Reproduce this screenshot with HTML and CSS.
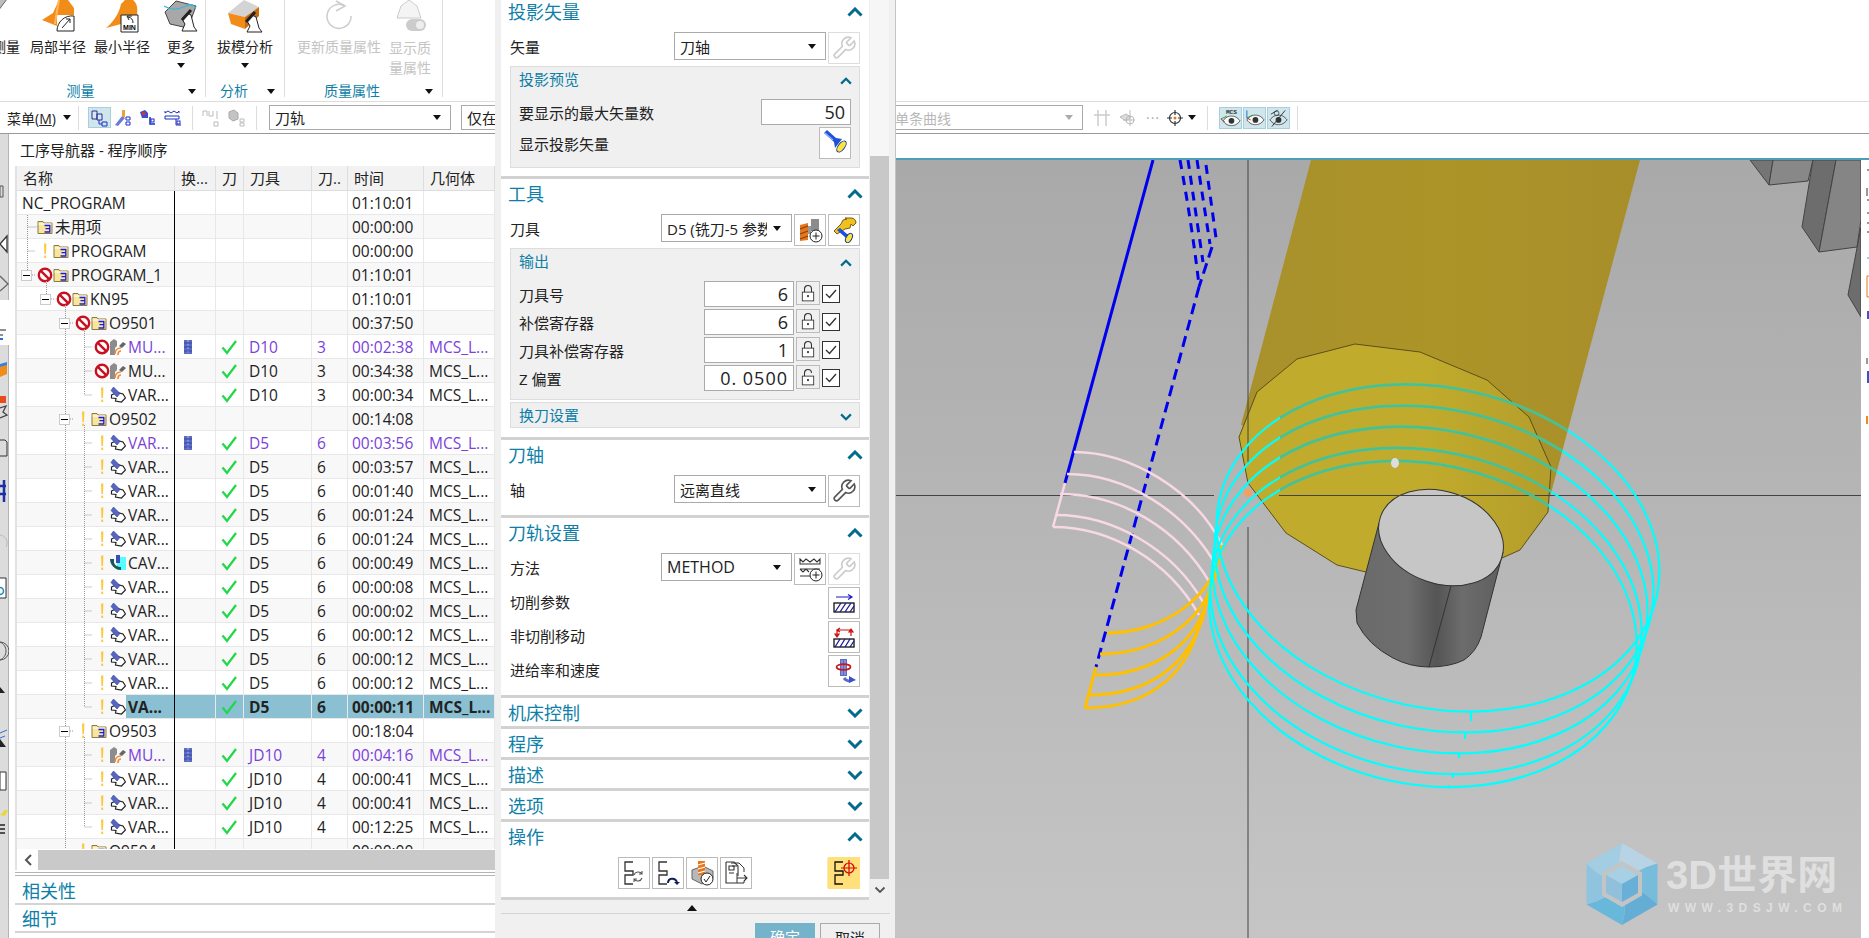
FILE: index.html
```html
<!DOCTYPE html>
<html lang="zh">
<head>
<meta charset="utf-8">
<title>工序导航器</title>
<link rel="stylesheet" href="styles.css">
</head>
<body>
<svg class="defs" width="0" height="0">
  <symbol id="stop" viewBox="0 0 16 16"><circle cx="8" cy="8" r="6.2" fill="#fff" stroke="#c9101f" stroke-width="2.4"/><path d="M3.600 3.600l8.800 8.800" stroke="#c9101f" stroke-width="2.400"/></symbol>
  <symbol id="bang" viewBox="0 0 16 16"><path d="M7 .5h2.400L9 11H7.400z" fill="#ffc83d"/><rect x="7.200" y="12.600" width="2" height="2.400" fill="#ffc83d"/></symbol>
  <symbol id="folder" viewBox="0 0 16 16"><path d="M1 14.500V2.500h5l1 1.500h8v10.500z" fill="#f7e69c" stroke="#8a7a3c"/><path d="M1.500 5h13" stroke="#fff"/><path d="M7.500 6.500h5.300v3.200H8.500m4.300 0v3.300H7.500" fill="none" stroke="#1b1be0" stroke-width="1.300"/></symbol>
  <symbol id="var" viewBox="0 0 16 16"><path d="M1.500 8L7 5.500l6 1.500 2.500 4-4 4-6-1 .5-2.500L1.500 11z" fill="#fff" stroke="#222" stroke-width="1.200"/><path d="M3.500 0L10 6.500 7 10 1 3.500z" fill="#5566c4" stroke="#34408c" stroke-width=".6"/></symbol>
  <symbol id="mu" viewBox="0 0 16 16"><path d="M0 16V3l4-3 3 2v5L5 9v7z" fill="#8c8c8c"/><path d="M5 15c0-3 2-6 6-6M8 16c0-2 1-4 3-4" fill="none" stroke="#ef8a3c" stroke-width="1.700"/><path d="M9 7l4-4 3 2-4 4z" fill="#666"/></symbol>
  <symbol id="cav" viewBox="0 0 16 16"><rect x="7" y="2" width="9" height="13" fill="#5ff"/><path d="M0 4h4v3c0 3 4 5 7 5v3C5 15 0 10 0 4z" fill="#15595a"/><path d="M6 0h4v8H6z" fill="#3a50b8"/></symbol>
  <symbol id="chk" viewBox="0 0 16 16"><path d="M1.500 8.500l4.500 5.500L15 2" fill="none" stroke="#22d84a" stroke-width="2.300"/></symbol>
  <symbol id="bar" viewBox="0 0 8 14"><rect width="8" height="14" fill="#5a6cc4"/><path d="M4 0v14" stroke="#b8c2ec" stroke-dasharray="2 1.500"/><path d="M0 3h8M0 7h8M0 11h8" stroke="#2b3a94" stroke-width=".7"/></symbol>
  <symbol id="wrench" viewBox="0 0 24 24"><path d="M14.700 6.300a1 1 0 0 0 0 1.400l1.600 1.600a1 1 0 0 0 1.400 0l3.770-3.770a6 6 0 0 1-7.940 7.940l-6.910 6.910a2.120 2.120 0 0 1-3-3l6.910-6.910a6 6 0 0 1 7.940-7.940l-3.760 3.760z" fill="#fff" stroke="currentColor" stroke-width="1.500"/></symbol>
  <symbol id="lock" viewBox="0 0 16 20"><path d="M4 9V5.500a4 4 0 0 1 8 0V9" fill="none" stroke="#333" stroke-width="1.200"/><rect x="1.500" y="9" width="13" height="10" fill="#fff" stroke="#333"/><circle cx="8" cy="13.500" r="1.300" fill="#333"/></symbol>
  <symbol id="unlock" viewBox="0 0 16 20"><path d="M4 9V5.500a4 4 0 0 1 8 0" fill="none" stroke="#333" stroke-width="1.200"/><rect x="1.500" y="9" width="13" height="10" fill="#fff" stroke="#333"/><circle cx="8" cy="13.500" r="1.300" fill="#333"/></symbol>
  <symbol id="torch" viewBox="0 0 26 26"><path d="M2 3l3-3 9 8 6 1-7 9-1-6z" fill="#1e50d8"/><path d="M3 3l8 7" stroke="#8fb0ff" stroke-width="1.200"/><ellipse cx="19.500" cy="16.500" rx="6.500" ry="3.200" transform="rotate(128 19.500 16.500)" fill="#ffe23c" stroke="#123a9c"/></symbol>
  <symbol id="meander" viewBox="0 0 16 26"><path d="M12 2H4v9h8v4H4v9h8" fill="none" stroke="currentColor" stroke-width="1.300"/></symbol>
  <symbol id="up" viewBox="0 0 16 10"><path d="M1.500 8.500L8 2l6.500 6.500" fill="none" stroke="#036b8c" stroke-width="3"/></symbol>
  <symbol id="down" viewBox="0 0 16 10"><path d="M1.500 1.500L8 8l6.500-6.500" fill="none" stroke="#036b8c" stroke-width="3"/></symbol>
</svg>

<div class="app">
  <header class="ribbon">
    <section class="group g1">
      <div class="tools">
        <div class="tool t-measure"><svg class="ricon" width="32" height="33" viewBox="0 0 32 33"><path d="M20 -6l5 5L4 27l-6-5z" fill="#bdbdbd" stroke="#666"/><path d="M4 22l2 2M8 17l2 2M12 12l2 2M16 7l2 2" stroke="#333"/></svg><span class="tlabel">测量</span></div>
        <div class="tool t-wide"><svg class="ricon" width="34" height="33" viewBox="0 0 34 33"><path d="M1 20L12 13 18 0H27L33 8V15H16V26z" fill="#f28c18"/><path d="M18 0c-2 10-3 16-4 24" fill="none" stroke="#ffb55a" stroke-width="2"/><path d="M16 31a15 15 0 0 1 17-15v15z" fill="#fff" stroke="#222"/><path d="M21 28l8-9m-4 0h4v4" fill="none" stroke="#222"/></svg><span class="tlabel">局部半径</span></div>
        <div class="tool t-wide"><svg class="ricon" width="34" height="33" viewBox="0 0 34 33"><path d="M1 28C8 22 14 14 16 4L20 0H28C32 3 33 8 32 15H16V24z" fill="#f28c18"/><path d="M16 15h17v17H16z" fill="#fff" stroke="#222"/><path d="M28 23a6 6 0 0 0-5-6m4-1h-5l2 4" fill="none" stroke="#222"/><text class="mintext" x="24.500" y="30">MIN</text></svg><span class="tlabel">最小半径</span></div>
        <div class="tool t-more"><svg class="ricon" width="34" height="33" viewBox="0 0 34 33"><path d="M1 12L12 1l20 5-8 22-18-4z" fill="#a8a8a8" stroke="#444"/><path d="M0 6c8 5 16 3 22 0s8 0 10 2" fill="none" stroke="#3cb6d8" stroke-width="1.300"/><path d="M18 31h15l-3-4-3-12-4-2-5 6 3 5z" fill="#fff" stroke="#222"/><path d="M18 20l9-10" stroke="#222" stroke-width="3"/></svg><span class="tlabel">更多</span><i class="caret"></i></div>
      </div>
      <div class="gfoot"><span class="gname">测量</span><i class="caret"></i></div>
    </section>
    <section class="group g2">
      <div class="tools">
        <div class="tool t-draft"><svg class="ricon" width="36" height="33" viewBox="0 0 36 33"><path d="M1 13L17 0l15 7-14 10z" fill="#d4d4d4"/><path d="M1 13l17 4v12L4 24z" fill="#f28c18"/><path d="M18 17l14-10v9l-14 13z" fill="#c66c10"/><path d="M20 32h15l-3-4-3-11-4-2-5 6 3 5z" fill="#fff" stroke="#222"/><path d="M19 22l9-10" stroke="#222" stroke-width="3"/></svg><span class="tlabel">拔模分析</span><i class="caret"></i></div>
      </div>
      <div class="gfoot"><span class="gname">分析</span><i class="caret"></i></div>
    </section>
    <section class="group g3">
      <div class="tools">
        <div class="tool t-update dis"><svg class="ricon" width="34" height="33" viewBox="0 0 34 33"><path d="M23 6a12 12 0 1 0 6 10" fill="none" stroke="#ccc" stroke-width="1.500"/><path d="M14 1l9 5-9 5" fill="none" stroke="#ccc" stroke-width="1.500"/></svg><span class="tlabel">更新质量属性</span></div>
        <div class="tool t-show dis"><svg class="ricon" width="34" height="33" viewBox="0 0 34 33"><path d="M8 6l8-6 8 6 4 12H4z" fill="#f4f4f4" stroke="#ccc"/><rect x="13" y="19" width="20" height="12" rx="6" fill="#ccc"/><circle cx="27" cy="25" r="4" fill="#eee"/></svg><span class="tlabel">显示质量属性</span></div>
      </div>
      <div class="gfoot"><span class="gname">质量属性</span><i class="caret"></i></div>
    </section>
  </header>

  <nav class="toolbar">
    <span class="menu">菜单(<u>M</u>)</span><i class="caret"></i>
    <i class="tsep s1"></i>
    <span class="tbtn on"><svg width="18" height="18" viewBox="0 0 18 18"><path d="M1 2h5v8H1zM6 5h5v6H6z" fill="#dce4f8" stroke="#23318c"/><path d="M11 13h5v4h-5zM8 11v4h3" fill="none" stroke="#1a2fc4"/></svg></span>
    <span class="tbtn"><svg width="18" height="18" viewBox="0 0 18 18"><path d="M1 16l7-9 3 2-7 8z" fill="#6a7ad8"/><path d="M8 1h3v7H8z" fill="#e8a23c"/><path d="M12 8h4v3h-4zM12 13h4v3h-4z" fill="none" stroke="#1a2fc4"/></svg></span>
    <span class="tbtn"><svg width="18" height="18" viewBox="0 0 18 18"><path d="M1 3l5-2 3 3v5H3z" fill="#3a4fc8"/><rect x="3" y="3" width="3" height="3" fill="#d8303c"/><path d="M11 8v7h5" fill="none" stroke="#1a2fc4" stroke-width="1.500"/><rect x="12" y="10" width="3" height="3" fill="none" stroke="#1a2fc4"/></svg></span>
    <span class="tbtn"><svg width="18" height="18" viewBox="0 0 18 18"><path d="M1 2v2l3-2 3 2 3-2 3 2 2-2v2M1 7h14v3H1z" fill="none" stroke="#1a2fc4"/><path d="M12 10v6h5" fill="none" stroke="#1a2fc4"/><rect x="13" y="12" width="3" height="3" fill="none" stroke="#1a2fc4"/></svg></span>
    <i class="tsep s2"></i>
    <span class="tbtn"><svg width="18" height="18" viewBox="0 0 18 18"><path d="M1 2v5M1 2h4v5M7 2v5h4V2m4 0v8m-3 3h4v4h-4z" fill="none" stroke="#bbb"/></svg></span>
    <span class="tbtn"><svg width="18" height="18" viewBox="0 0 18 18"><path d="M2 3l5-2 4 3v6l-5 2-4-3z" fill="#c4c4c4" stroke="#aaa"/><path d="M13 10h4v3h-4zM13 14h4v3h-4z" fill="none" stroke="#bbb"/></svg></span>
    <i class="tsep s3"></i>
    <div class="sel-box f1"><span>刀轨</span><i class="caret"></i></div>
    <div class="sel-box f2"><span>仅在工作部件内部</span><i class="caret"></i></div>
    <div class="sel-box f3"><span class="grey">单条曲线</span><i class="caret gc"></i></div>
    <span class="sicon i1"><svg width="17" height="18" viewBox="0 0 17 18"><path d="M4 1v16M12 1v16M0 6h16" stroke="#ccc" stroke-width="1.500"/></svg></span>
    <span class="sicon i2"><svg width="17" height="18" viewBox="0 0 17 18"><path d="M1 8l6-3 5 3-5 4z" fill="#ddd" stroke="#bbb"/><circle cx="11" cy="11" r="4" fill="none" stroke="#bbb"/><path d="M11 1v16M4 11h12" stroke="#bbb"/></svg></span>
    <span class="dots">···</span>
    <span class="sicon i3"><svg width="16" height="16" viewBox="0 0 16 16"><circle cx="8" cy="8" r="5.500" fill="#fff" stroke="#333" stroke-width="1.200"/><path d="M8 0v5M8 11v5M0 8h5M11 8h5" stroke="#333" stroke-width="1.200"/><circle cx="8" cy="8" r="1.500" fill="#e8761c"/></svg></span>
    <i class="caret cs"></i>
    <i class="tsep s4"></i>
    <span class="vbtn"><svg width="21" height="20" viewBox="0 0 22 20"><text class="mcs" x="12" y="6">MCS</text><path d="M3 13c3-4 6-5 9-5s6 1 9 5c-3 4-6 5-9 5s-6-1-9-5z" fill="#f4fafb" stroke="#333" stroke-width=".8"/><circle cx="12" cy="13" r="3" fill="#333"/><path d="M1 11l6-3" stroke="#21a83c"/><path d="M1 11l4 3" stroke="#d8202c"/></svg></span>
    <span class="vbtn"><svg width="21" height="20" viewBox="0 0 22 20"><path d="M3 12c3-4 6-5 9-5s6 1 9 5c-3 4-6 5-9 5s-6-1-9-5z" fill="#f4fafb" stroke="#333" stroke-width=".8"/><circle cx="12" cy="12" r="3" fill="#333"/><path d="M3 2v8" stroke="#1c6fd8"/><path d="M3 10l6-3" stroke="#21a83c"/><path d="M3 10l4 2" stroke="#d8202c"/></svg></span>
    <span class="vbtn"><svg width="21" height="20" viewBox="0 0 22 20"><path d="M2 12c3-4 6-5 9-5s6 1 9 5c-3 4-6 5-9 5s-6-1-9-5z" fill="none" stroke="#333" stroke-width=".8"/><circle cx="11" cy="12" r="3" fill="#333"/><path d="M4 19L18 2M3 6l7-4" stroke="#333"/><circle cx="9" cy="5" r="2.500" fill="none" stroke="#333" stroke-width=".8"/></svg></span>
    <i class="tsep s5"></i>
  </nav>

  <main class="main">
    <aside class="strip">
      <svg width="9" height="804" viewBox="0 134 9 804">
        <rect y="134" width="8" height="166" fill="#dcdcdc"/>
        <rect x="8" y="134" width="1" height="166" fill="#b4b4b4"/>
        <rect y="345" width="8" height="593" fill="#dcdcdc"/>
        <rect x="8" y="345" width="1" height="593" fill="#b4b4b4"/>
        <path d="M3 186h-3v11h3z" fill="none" stroke="#555"/>
        <path d="M7 236L0 244l7 8z" fill="#fff" stroke="#333" stroke-width="1.300"/>
        <path d="M0 276l8 8-8 7" fill="none" stroke="#666" stroke-width="1.300"/>
        <path d="M0 330h6M0 335h3" stroke="#222"/><path d="M0 339h3" stroke="#2a6fd8" stroke-width="2"/>
        <path d="M0 367l7-3v10l-7 3z" fill="#f28c18"/><path d="M0 364l7-2v3l-7 2z" fill="#3a7fd8"/>
        <rect x="0" y="396" width="6" height="7" fill="#e84c1c"/><path d="M0 408l6-2-3 6 4 3-7 3" fill="none" stroke="#444" stroke-width="1.300"/>
        <path d="M0 440h5l2 2v14H0" fill="none" stroke="#333"/>
        <path d="M4 480v22M0 486h6M0 494h6" stroke="#1e2ea8" stroke-width="2.500"/>
        <path d="M0 535a8 8 0 0 1 6 12" fill="none" stroke="#bbb"/>
        <path d="M0 578h6v20H0" fill="#fff" stroke="#333"/><circle cx="0" cy="591" r="3.500" fill="none" stroke="#1e8ab8" stroke-width="1.500"/>
        <path d="M0 642a9 9 0 0 1 0 18c4-2 6-5 6-9s-2-7-6-9z" fill="none" stroke="#555"/>
        <path d="M0 687l5 6H0z" fill="#222"/>
        <path d="M0 733l7-3M0 738l5-2" stroke="#2a6fd8"/><path d="M0 739l6 8H0z" fill="#222"/>
        <path d="M0 772h6v18H0z" fill="#fff" stroke="#333"/>
        <path d="M0 815l5-5h3l-3 6z" fill="#e8d83c"/><path d="M0 825h5M0 829h5M0 833h5" stroke="#222" stroke-width="1.500"/>
      </svg>
    </aside>

    <section class="nav">
      <h2 class="nav-title">工序导航器 - 程序顺序</h2>
      <div class="table">
        <div class="thead">
          <div class="h hname">名称</div><div class="h">换...</div><div class="h">刀</div><div class="h">刀具</div><div class="h">刀..</div><div class="h">时间</div><div class="h">几何体</div>
        </div>
        <div class="rows">
          <div class="row"><div class="name lv0"><span class="lbl">NC_PROGRAM</span></div><div class="c"></div><div class="c"></div><div class="c"></div><div class="c"></div><div class="c t">01:10:01</div><div class="c g"></div></div>
          <div class="row"><div class="name lv1"><i class="gap"></i><svg class="si"><use href="#folder"/></svg><span class="lbl">未用项</span></div><div class="c"></div><div class="c"></div><div class="c"></div><div class="c"></div><div class="c t">00:00:00</div><div class="c g"></div></div>
          <div class="row"><div class="name lv1"><i class="gap"></i><svg class="si"><use href="#bang"/></svg><svg class="si"><use href="#folder"/></svg><span class="lbl">PROGRAM</span></div><div class="c"></div><div class="c"></div><div class="c"></div><div class="c"></div><div class="c t">00:00:00</div><div class="c g"></div></div>
          <div class="row"><div class="name lv1"><i class="box"></i><svg class="si"><use href="#stop"/></svg><svg class="si"><use href="#folder"/></svg><span class="lbl">PROGRAM_1</span></div><div class="c"></div><div class="c"></div><div class="c"></div><div class="c"></div><div class="c t">01:10:01</div><div class="c g"></div></div>
          <div class="row"><div class="name lv2"><i class="box"></i><svg class="si"><use href="#stop"/></svg><svg class="si"><use href="#folder"/></svg><span class="lbl">KN95</span></div><div class="c"></div><div class="c"></div><div class="c"></div><div class="c"></div><div class="c t">01:10:01</div><div class="c g"></div></div>
          <div class="row"><div class="name lv3"><i class="box"></i><svg class="si"><use href="#stop"/></svg><svg class="si"><use href="#folder"/></svg><span class="lbl">O9501</span></div><div class="c"></div><div class="c"></div><div class="c"></div><div class="c"></div><div class="c t">00:37:50</div><div class="c g"></div></div>
          <div class="row pend"><div class="name lv4"><i class="gap"></i><svg class="si"><use href="#stop"/></svg><svg class="si"><use href="#mu"/></svg><span class="lbl">MU...</span></div><div class="c"><svg class="bar"><use href="#bar"/></svg></div><div class="c"><svg class="ck"><use href="#chk"/></svg></div><div class="c">D10</div><div class="c">3</div><div class="c t">00:02:38</div><div class="c g">MCS_L...</div></div>
          <div class="row"><div class="name lv4"><i class="gap"></i><svg class="si"><use href="#stop"/></svg><svg class="si"><use href="#mu"/></svg><span class="lbl">MU...</span></div><div class="c"></div><div class="c"><svg class="ck"><use href="#chk"/></svg></div><div class="c">D10</div><div class="c">3</div><div class="c t">00:34:38</div><div class="c g">MCS_L...</div></div>
          <div class="row"><div class="name lv4"><i class="gap"></i><svg class="si"><use href="#bang"/></svg><svg class="si"><use href="#var"/></svg><span class="lbl">VAR...</span></div><div class="c"></div><div class="c"><svg class="ck"><use href="#chk"/></svg></div><div class="c">D10</div><div class="c">3</div><div class="c t">00:00:34</div><div class="c g">MCS_L...</div></div>
          <div class="row"><div class="name lv3"><i class="box"></i><svg class="si"><use href="#bang"/></svg><svg class="si"><use href="#folder"/></svg><span class="lbl">O9502</span></div><div class="c"></div><div class="c"></div><div class="c"></div><div class="c"></div><div class="c t">00:14:08</div><div class="c g"></div></div>
          <div class="row pend"><div class="name lv4"><i class="gap"></i><svg class="si"><use href="#bang"/></svg><svg class="si"><use href="#var"/></svg><span class="lbl">VAR...</span></div><div class="c"><svg class="bar"><use href="#bar"/></svg></div><div class="c"><svg class="ck"><use href="#chk"/></svg></div><div class="c">D5</div><div class="c">6</div><div class="c t">00:03:56</div><div class="c g">MCS_L...</div></div>
          <div class="row"><div class="name lv4"><i class="gap"></i><svg class="si"><use href="#bang"/></svg><svg class="si"><use href="#var"/></svg><span class="lbl">VAR...</span></div><div class="c"></div><div class="c"><svg class="ck"><use href="#chk"/></svg></div><div class="c">D5</div><div class="c">6</div><div class="c t">00:03:57</div><div class="c g">MCS_L...</div></div>
          <div class="row"><div class="name lv4"><i class="gap"></i><svg class="si"><use href="#bang"/></svg><svg class="si"><use href="#var"/></svg><span class="lbl">VAR...</span></div><div class="c"></div><div class="c"><svg class="ck"><use href="#chk"/></svg></div><div class="c">D5</div><div class="c">6</div><div class="c t">00:01:40</div><div class="c g">MCS_L...</div></div>
          <div class="row"><div class="name lv4"><i class="gap"></i><svg class="si"><use href="#bang"/></svg><svg class="si"><use href="#var"/></svg><span class="lbl">VAR...</span></div><div class="c"></div><div class="c"><svg class="ck"><use href="#chk"/></svg></div><div class="c">D5</div><div class="c">6</div><div class="c t">00:01:24</div><div class="c g">MCS_L...</div></div>
          <div class="row"><div class="name lv4"><i class="gap"></i><svg class="si"><use href="#bang"/></svg><svg class="si"><use href="#var"/></svg><span class="lbl">VAR...</span></div><div class="c"></div><div class="c"><svg class="ck"><use href="#chk"/></svg></div><div class="c">D5</div><div class="c">6</div><div class="c t">00:01:24</div><div class="c g">MCS_L...</div></div>
          <div class="row"><div class="name lv4"><i class="gap"></i><svg class="si"><use href="#bang"/></svg><svg class="si"><use href="#cav"/></svg><span class="lbl">CAV...</span></div><div class="c"></div><div class="c"><svg class="ck"><use href="#chk"/></svg></div><div class="c">D5</div><div class="c">6</div><div class="c t">00:00:49</div><div class="c g">MCS_L...</div></div>
          <div class="row"><div class="name lv4"><i class="gap"></i><svg class="si"><use href="#bang"/></svg><svg class="si"><use href="#var"/></svg><span class="lbl">VAR...</span></div><div class="c"></div><div class="c"><svg class="ck"><use href="#chk"/></svg></div><div class="c">D5</div><div class="c">6</div><div class="c t">00:00:08</div><div class="c g">MCS_L...</div></div>
          <div class="row"><div class="name lv4"><i class="gap"></i><svg class="si"><use href="#bang"/></svg><svg class="si"><use href="#var"/></svg><span class="lbl">VAR...</span></div><div class="c"></div><div class="c"><svg class="ck"><use href="#chk"/></svg></div><div class="c">D5</div><div class="c">6</div><div class="c t">00:00:02</div><div class="c g">MCS_L...</div></div>
          <div class="row"><div class="name lv4"><i class="gap"></i><svg class="si"><use href="#bang"/></svg><svg class="si"><use href="#var"/></svg><span class="lbl">VAR...</span></div><div class="c"></div><div class="c"><svg class="ck"><use href="#chk"/></svg></div><div class="c">D5</div><div class="c">6</div><div class="c t">00:00:12</div><div class="c g">MCS_L...</div></div>
          <div class="row"><div class="name lv4"><i class="gap"></i><svg class="si"><use href="#bang"/></svg><svg class="si"><use href="#var"/></svg><span class="lbl">VAR...</span></div><div class="c"></div><div class="c"><svg class="ck"><use href="#chk"/></svg></div><div class="c">D5</div><div class="c">6</div><div class="c t">00:00:12</div><div class="c g">MCS_L...</div></div>
          <div class="row"><div class="name lv4"><i class="gap"></i><svg class="si"><use href="#bang"/></svg><svg class="si"><use href="#var"/></svg><span class="lbl">VAR...</span></div><div class="c"></div><div class="c"><svg class="ck"><use href="#chk"/></svg></div><div class="c">D5</div><div class="c">6</div><div class="c t">00:00:12</div><div class="c g">MCS_L...</div></div>
          <div class="row sel"><div class="name lv4"><i class="gap"></i><svg class="si"><use href="#bang"/></svg><svg class="si"><use href="#var"/></svg><span class="lbl">VA...</span></div><div class="c"></div><div class="c"><svg class="ck"><use href="#chk"/></svg></div><div class="c">D5</div><div class="c">6</div><div class="c t">00:00:11</div><div class="c g">MCS_L...</div></div>
          <div class="row"><div class="name lv3"><i class="box"></i><svg class="si"><use href="#bang"/></svg><svg class="si"><use href="#folder"/></svg><span class="lbl">O9503</span></div><div class="c"></div><div class="c"></div><div class="c"></div><div class="c"></div><div class="c t">00:18:04</div><div class="c g"></div></div>
          <div class="row pend"><div class="name lv4"><i class="gap"></i><svg class="si"><use href="#bang"/></svg><svg class="si"><use href="#mu"/></svg><span class="lbl">MU...</span></div><div class="c"><svg class="bar"><use href="#bar"/></svg></div><div class="c"><svg class="ck"><use href="#chk"/></svg></div><div class="c">JD10</div><div class="c">4</div><div class="c t">00:04:16</div><div class="c g">MCS_L...</div></div>
          <div class="row"><div class="name lv4"><i class="gap"></i><svg class="si"><use href="#bang"/></svg><svg class="si"><use href="#var"/></svg><span class="lbl">VAR...</span></div><div class="c"></div><div class="c"><svg class="ck"><use href="#chk"/></svg></div><div class="c">JD10</div><div class="c">4</div><div class="c t">00:00:41</div><div class="c g">MCS_L...</div></div>
          <div class="row"><div class="name lv4"><i class="gap"></i><svg class="si"><use href="#bang"/></svg><svg class="si"><use href="#var"/></svg><span class="lbl">VAR...</span></div><div class="c"></div><div class="c"><svg class="ck"><use href="#chk"/></svg></div><div class="c">JD10</div><div class="c">4</div><div class="c t">00:00:41</div><div class="c g">MCS_L...</div></div>
          <div class="row"><div class="name lv4"><i class="gap"></i><svg class="si"><use href="#bang"/></svg><svg class="si"><use href="#var"/></svg><span class="lbl">VAR...</span></div><div class="c"></div><div class="c"><svg class="ck"><use href="#chk"/></svg></div><div class="c">JD10</div><div class="c">4</div><div class="c t">00:12:25</div><div class="c g">MCS_L...</div></div>
          <div class="row"><div class="name lv3"><i class="gap"></i><svg class="si"><use href="#bang"/></svg><svg class="si"><use href="#folder"/></svg><span class="lbl">O9504</span></div><div class="c"></div><div class="c"></div><div class="c"></div><div class="c"></div><div class="c t">00:00:00</div><div class="c g"></div></div>
          <svg class="tree" width="157" height="658" viewBox="17 191 157 658">
            <path d="M27.500 215v55M27.500 227h9M27.500 251h8M32 275h4M46.500 281v13M51 299h4M65.500 305v13M70 323h4M65.500 329v85M70 419h4M65.500 425v301M70 731h4M65.500 737v112M84.500 329v66M84.500 347h8M84.500 371h8M84.500 395h8M84.500 425v282M84.500 443h8M84.500 467h8M84.500 491h8M84.500 515h8M84.500 539h8M84.500 563h8M84.500 587h8M84.500 611h8M84.500 635h8M84.500 659h8M84.500 683h8M84.500 707h8M84.500 737v90M84.500 755h8M84.500 779h8M84.500 803h8M84.500 827h8" fill="none" stroke="#999" stroke-dasharray="1 1"/>
          </svg>
        </div>
        <div class="hscroll"><span class="hleft"><svg width="8" height="12" viewBox="0 0 8 12"><path d="M7 1L2 6l5 5" fill="none" stroke="#555" stroke-width="2"/></svg></span><span class="hthumb"></span></div>
      </div>
      <div class="panes">
        <div class="pane">相关性</div>
        <div class="pane">细节</div>
      </div>
    </section>

    <div class="dialog-slot"></div>

    <section class="view">
      <div class="view-band"></div>
      <div class="view-row">
        <svg class="scene" width="965" height="778" viewBox="896 160 965 778">
          <defs>
            <linearGradient id="bg" x1="0" y1="0" x2="0" y2="1"><stop offset="0" stop-color="#a9a9a9"/><stop offset="1" stop-color="#c5c5c5"/></linearGradient>
            <linearGradient id="dark" x1="0" y1="0" x2="1" y2="0"><stop offset="0" stop-color="#a8902c"/><stop offset=".5" stop-color="#ad9428"/><stop offset="1" stop-color="#a88e2a"/></linearGradient>
            <linearGradient id="face" x1="0" y1="0" x2="1" y2="0"><stop offset="0" stop-color="#c0ab2c"/><stop offset=".6" stop-color="#c0ab2c"/><stop offset="1" stop-color="#b49e2c"/></linearGradient>
            <linearGradient id="steel" x1="0" y1="0" x2="1" y2="0"><stop offset="0" stop-color="#6a6a6a"/><stop offset=".35" stop-color="#6e6e6e"/><stop offset=".55" stop-color="#555"/><stop offset=".72" stop-color="#6c6c6c"/><stop offset="1" stop-color="#5e5e5e"/></linearGradient>
            <clipPath id="onYellow"><path d="M1311 160H1640L1550 497 1548 512 1520 550 1502 558 1366 572 1337 565 1286 533 1280 500V415Z"/></clipPath>
          </defs>
          <rect x="896" y="160" width="965" height="778" fill="url(#bg)"/>
          <path d="M1750 160l19 25 4-25z" fill="#757575" stroke="#444"/>
          <path d="M1773 160l-4 25 39-4 5-21z" fill="#888" stroke="#444"/>
          <path d="M1813 160l-11 67 17 25 17-92z" fill="#6d6d6d" stroke="#444"/>
          <path d="M1836 160l-17 92 38-5 4-27v-60z" fill="#858585" stroke="#444"/>
          <path d="M1861 227l-13 68 13 22z" fill="#6d6d6d" stroke="#444"/>

          <path d="M1311 160H1640L1550 497 1241 425Z" fill="url(#dark)"/>
          <path d="M1239 437L1257 392 1297 359 1355 344 1420 352 1487 380 1529 417 1551 467 1548 512 1520 550 1502 558 1366 572 1337 565 1286 533 1248 483Z" fill="url(#face)" stroke="#5c4f1a"/>
          <path d="M1379 523L1356 610 1357 623Q1368 645 1393 658 1410 667 1429 667 1450 667 1464 660 1476 652 1481 637L1503 552Z" fill="url(#steel)" stroke="#333"/>
          <path d="M1451 586L1429 667" stroke="#333"/>
          <ellipse cx="1441" cy="537.500" rx="64" ry="46" transform="rotate(19 1441 537.500)" fill="#c6c6c6" stroke="#333"/>

          <g class="axis">
            <path d="M1248 160V462M1248 527V938M896 495.500H1214M1279 495.500H1861"/>
          </g>

          <g class="toolpath blue">
            <path d="M1153 160L1065 483"/>
          </g>
          <g class="toolpath blue dash">
            <path d="M1199 287L1096 667"/>
            <path d="M1212 247L1199 287"/>
          </g>
          <g class="toolpath blue dash2">
            <path d="M1180 160Q1192 225 1199 285"/>
            <path d="M1188 160L1203 262"/>
            <path d="M1197 160L1210 244"/>
            <path d="M1206 165L1216 238"/>
          </g>

          <g class="toolpath pink">
            <path d="M1074 452C1130 452 1195 490 1222 545"/>
            <path d="M1067 474C1125 474 1185 510 1217 567"/>
            <path d="M1060 494C1120 494 1178 528 1210 583"/>
            <path d="M1056 515C1112 515 1172 548 1203 602"/>
            <path d="M1053 527C1110 527 1168 560 1199 615"/>
            <path d="M1065 483L1053 527"/>
          </g>
          <g class="toolpath amber">
            <path d="M1107 633C1160 633 1215 600 1222 545"/>
            <path d="M1100 654C1155 654 1208 622 1217 567"/>
            <path d="M1096 675C1150 675 1198 648 1210 590"/>
            <path d="M1089 695C1145 695 1190 668 1205 610"/>
            <path d="M1085 708C1140 708 1185 682 1199 625"/>
            <path d="M1096 667L1085 708"/>
          </g>

          <g class="rings cyan">
            <ellipse cx="1438" cy="548" rx="224" ry="160" transform="rotate(12.500 1438 548)"/>
            <ellipse cx="1434" cy="569" rx="222" ry="160" transform="rotate(12.500 1434 569)"/>
            <ellipse cx="1430" cy="590" rx="220" ry="160" transform="rotate(12.500 1430 590)"/>
            <ellipse cx="1426" cy="611" rx="218" ry="160" transform="rotate(12.500 1426 611)"/>
            <ellipse cx="1423" cy="624" rx="216" ry="160" transform="rotate(12.500 1423 624)"/>
            <path d="M1471 712v9M1465 732v7M1459 752v6M1453 773v5M1449 785v3"/>
          </g>
          <g class="rings teal" clip-path="url(#onYellow)">
            <ellipse cx="1438" cy="548" rx="224" ry="160" transform="rotate(12.500 1438 548)"/>
            <ellipse cx="1434" cy="569" rx="222" ry="160" transform="rotate(12.500 1434 569)"/>
            <ellipse cx="1430" cy="590" rx="220" ry="160" transform="rotate(12.500 1430 590)"/>
            <ellipse cx="1426" cy="611" rx="218" ry="160" transform="rotate(12.500 1426 611)"/>
            <ellipse cx="1423" cy="624" rx="216" ry="160" transform="rotate(12.500 1423 624)"/>
          </g>
          <circle cx="1248" cy="493" r="4" fill="#f0a060"/>
          <ellipse cx="1395" cy="463" rx="4" ry="5" fill="#ddd"/>

          <g transform="translate(1622 884)">
            <path class="b1" d="M0-41L35.500-20.500Q14.300-15.200 0 0Q-6-20 0-41Z"/>
            <path class="b2" d="M0-41L35.500-20.500Q14.300-15.200 0 0Q-6-20 0-41Z" transform="rotate(60)"/>
            <path class="b3" d="M0-41L35.500-20.500Q14.300-15.200 0 0Q-6-20 0-41Z" transform="rotate(120)"/>
            <path class="b4" d="M0-41L35.500-20.500Q14.300-15.200 0 0Q-6-20 0-41Z" transform="rotate(180)"/>
            <path class="b5" d="M0-41L35.500-20.500Q14.300-15.200 0 0Q-6-20 0-41Z" transform="rotate(240)"/>
            <path class="b6" d="M0-41L35.500-20.500Q14.300-15.200 0 0Q-6-20 0-41Z" transform="rotate(300)"/>
            <path d="M0-23L20-11.500V11.500L0 23-20 11.500V-11.500Z" fill="#c4c4c4"/>
            <path d="M0-18L16-9 0 0-16-9Z" fill="#a8d0e4"/>
            <path d="M-16-9L0 0V18L-16 9Z" fill="#90c0dc"/>
            <path d="M16-9L0 0V18L16 9Z" fill="#68b0d8"/>
          </g>
          <text class="wm" x="1666" y="889">3D世界网</text>
          <text class="wm2" x="1668" y="912" textLength="174" lengthAdjust="spacing">WWW.3DSJW.COM</text>
        </svg>
        <aside class="rstrip">
          <svg width="8" height="778" viewBox="1861 160 8 778">
            <path d="M1867 170h2M1867 188v8M1867 200h2M1867 213h2M1867 223h2M1867 232h2" stroke="#333"/>
            <path d="M1867 258h2" stroke="#3a9ad8"/>
            <path d="M1869 276h-2v21h2" fill="none" stroke="#e07820"/>
            <rect x="1867" y="311" width="2" height="8" fill="#4a50c8"/>
            <rect x="1867" y="371" width="2" height="12" fill="#3a50c8"/>
            <path d="M1867 358v6" stroke="#333"/>
            <path d="M1867 416v8" stroke="#e88c20" stroke-width="2"/>
          </svg>
        </aside>
      </div>
    </section>
  </main>

  <aside class="dialog">
    <div class="dlg-main">
      <div class="dlg-content">
        <div class="sec first">
          <div class="sec-head"><span>投影矢量</span><svg class="chev"><use href="#up"/></svg></div>
          <div class="f-row"><span class="flabel">矢量</span><div class="ctrl"><div class="sel-box wsel"><span>刀轴</span><i class="caret"></i></div><span class="btn off"><svg><use href="#wrench"/></svg></span></div></div>
          <div class="sub s-preview">
            <div class="sub-head"><span>投影预览</span><svg class="chev-s"><use href="#up"/></svg></div>
            <div class="sub-row"><span>要显示的最大矢量数</span><div class="val v50">50</div></div>
            <div class="sub-row tall"><span>显示投影矢量</span><span class="btn"><svg><use href="#torch"/></svg></span></div>
          </div>
        </div>
        <div class="sec">
          <div class="sec-head"><span>工具</span><svg class="chev"><use href="#up"/></svg></div>
          <div class="f-row"><span class="flabel">刀具</span><div class="ctrl"><div class="sel-box nsel"><span>D5 (铣刀-5 参数</span><i class="caret"></i></div>
            <span class="btn"><svg viewBox="0 0 26 26"><rect x="14" y="2" width="8" height="12" fill="#8c8c8c"/><path d="M3 8l8-2v17l-8 1z" fill="#e8761c"/><path d="M3 12l8-3M3 17l8-3M3 22l8-3" stroke="#7a4416" stroke-width="1.200"/><path d="M11 9h3v8h-3z" fill="#9a9a9a"/><circle cx="19" cy="19" r="6" fill="#fff" stroke="#222"/><path d="M15.500 19h7M19 15.500v7" stroke="#222"/></svg></span>
            <span class="btn"><svg viewBox="0 0 26 26"><path d="M20 1c3 0 5 2 5 5l-3 3-2-2-1 4-5 1-8 5-3-3 7-7 2-4 4-1-2-1z" fill="#f0c020" stroke="#7a5a10"/><path d="M6 13l3-2 7 6 5 0-4 8-2-4z" fill="#1e50d8"/><ellipse cx="18" cy="21" rx="5" ry="2.800" transform="rotate(120 18 21)" fill="#ffe23c" stroke="#123a9c"/></svg></span>
          </div></div>
          <div class="sub s-output">
            <div class="sub-head"><span>输出</span><svg class="chev-s"><use href="#up"/></svg></div>
            <div class="sub-row"><span>刀具号</span><div class="out"><div class="val vout">6</div><span class="lockb"><svg><use href="#lock"/></svg></span><span class="check"><svg width="14" height="14" viewBox="0 0 14 14"><path d="M2 7l3.500 3.500L12 3" fill="none" stroke="#333" stroke-width="1.400"/></svg></span></div></div>
            <div class="sub-row"><span>补偿寄存器</span><div class="out"><div class="val vout">6</div><span class="lockb"><svg><use href="#lock"/></svg></span><span class="check"><svg width="14" height="14" viewBox="0 0 14 14"><path d="M2 7l3.500 3.500L12 3" fill="none" stroke="#333" stroke-width="1.400"/></svg></span></div></div>
            <div class="sub-row"><span>刀具补偿寄存器</span><div class="out"><div class="val vout">1</div><span class="lockb"><svg><use href="#lock"/></svg></span><span class="check"><svg width="14" height="14" viewBox="0 0 14 14"><path d="M2 7l3.500 3.500L12 3" fill="none" stroke="#333" stroke-width="1.400"/></svg></span></div></div>
            <div class="sub-row"><span>Z 偏置</span><div class="out"><div class="val vout vz">0. 0500</div><span class="lockb"><svg><use href="#unlock"/></svg></span><span class="check"><svg width="14" height="14" viewBox="0 0 14 14"><path d="M2 7l3.500 3.500L12 3" fill="none" stroke="#333" stroke-width="1.400"/></svg></span></div></div>
          </div>
          <div class="sub s-change"><div class="sub-head"><span>换刀设置</span><svg class="chev-s"><use href="#down"/></svg></div></div>
        </div>
        <div class="sec">
          <div class="sec-head"><span>刀轴</span><svg class="chev"><use href="#up"/></svg></div>
          <div class="f-row"><span class="flabel">轴</span><div class="ctrl"><div class="sel-box wsel"><span>远离直线</span><i class="caret"></i></div><span class="btn"><svg><use href="#wrench"/></svg></span></div></div>
        </div>
        <div class="sec">
          <div class="sec-head"><span>刀轨设置</span><svg class="chev"><use href="#up"/></svg></div>
          <div class="f-row"><span class="flabel">方法</span><div class="ctrl"><div class="sel-box nsel"><span class="latin">METHOD</span><i class="caret"></i></div>
            <span class="btn"><svg viewBox="0 0 26 26"><path d="M3 3l3 3 3-3 4 3 4-3 3 3 3-3v5H3zM3 13h20M3 13l3 3 3-3 3 3" fill="none" stroke="#333" stroke-width="1.100"/><path d="M3 20h12" stroke="#333"/><circle cx="19" cy="19" r="6" fill="#fff" stroke="#222"/><path d="M15.500 19h7M19 15.500v7" stroke="#222"/></svg></span>
            <span class="btn off"><svg><use href="#wrench"/></svg></span></div></div>
          <div class="f-row"><span class="flabel">切削参数</span><span class="btn"><svg viewBox="0 0 26 26"><path d="M5 7h15m-3-2.500L21 7l-4 2.500" fill="none" stroke="#1a1ac8" stroke-width="1.200"/><rect x="3" y="13" width="20" height="9" fill="#fff" stroke="#111" stroke-width="1.300"/><path d="M4 22l6-9M9 22l6-9M14 22l6-9M19 22l4-6" stroke="#1a1a9c" stroke-width="1.300"/></svg></span></div>
          <div class="f-row"><span class="flabel">非切削移动</span><span class="btn"><svg viewBox="0 0 26 26"><path d="M6 12V6h14v6M6 13l-2-3h4zM20 5l-2 3h4zM9 4L6 6l3 2" fill="none" stroke="#cc1010" stroke-width="1.200"/><rect x="3" y="15" width="20" height="8" fill="#fff" stroke="#111" stroke-width="1.300"/><path d="M4 23l5-8M9 23l5-8M14 23l5-8M19 23l4-6" stroke="#1a1a9c" stroke-width="1.300"/></svg></span></div>
          <div class="f-row"><span class="flabel">进给率和速度</span><span class="btn"><svg viewBox="0 0 26 26"><rect x="9" y="1" width="7" height="17" fill="#5a6cc8"/><path d="M11 2v15M14 2v15" stroke="#a4b2ee"/><ellipse cx="12.500" cy="9" rx="7" ry="2.800" fill="none" stroke="#c81818" stroke-width="1.700"/><path d="M13 20c3 4 6 3 7 2" fill="none" stroke="#5a6cc8" stroke-width="3"/><path d="M18 18l7 4-7 3z" fill="#3a50d0"/></svg></span></div>
        </div>
        <div class="sec closed"><div class="sec-head"><span>机床控制</span><svg class="chev"><use href="#down"/></svg></div></div>
        <div class="sec closed"><div class="sec-head"><span>程序</span><svg class="chev"><use href="#down"/></svg></div></div>
        <div class="sec closed"><div class="sec-head"><span>描述</span><svg class="chev"><use href="#down"/></svg></div></div>
        <div class="sec closed"><div class="sec-head"><span>选项</span><svg class="chev"><use href="#down"/></svg></div></div>
        <div class="sec">
          <div class="sec-head"><span>操作</span><svg class="chev"><use href="#up"/></svg></div>
          <div class="ops">
            <span class="btn"><svg viewBox="0 0 26 26"><use href="#meander" x="0" y="0" width="16" height="26" color="#333"/><path d="M21 14a4.500 4.500 0 0 0-8 1M13 19a4.500 4.500 0 0 0 8-1M21 11v3h-3M13 22v-3h3" fill="none" stroke="#555" stroke-width="1.100"/></svg></span>
            <span class="btn"><svg viewBox="0 0 26 26"><use href="#meander" x="0" y="0" width="16" height="26" color="#333"/><path d="M13 23c0-5 7-6 9-1" fill="none" stroke="#12205c" stroke-width="2"/><path d="M19 22h6l-3 3z" fill="#12205c"/></svg></span>
            <span class="btn"><svg viewBox="0 0 26 26"><path d="M3 10l11-4 10 5v7l-11 6-10-5z" fill="#b8b8b8" stroke="#666"/><path d="M9 1h7v14H9z" fill="#e8761c"/><path d="M9 5l7-2M9 9l7-2M9 13l7-2" stroke="#fff" stroke-width="1.200"/><circle cx="18" cy="19" r="6" fill="#fff" stroke="#222"/><path d="M15 19l2 3 4-6" fill="none" stroke="#222"/></svg></span>
            <span class="btn"><svg viewBox="0 0 26 26"><path d="M3 2h8l4 4v10M3 2v21h11M6 6h5v4H6zM6 13h5" fill="none" stroke="#333" stroke-width="1.100"/><path d="M9 6h5M8 3h8l5 5v4" fill="none" stroke="#333"/><path d="M14 18h10m-3-3l3 3-3 3" fill="none" stroke="#333" stroke-width="1.100"/><path d="M14 13v10h7v-2" fill="none" stroke="#333"/></svg></span>
            <span class="btn-hi"><svg viewBox="0 0 32 32"><use href="#meander" x="3" y="3" width="16" height="26" color="#111"/><circle cx="21" cy="11" r="5" fill="none" stroke="#d80000" stroke-width="1.200"/><path d="M21 3v16M13 11h16" stroke="#d80000" stroke-width="1.200"/></svg></span>
          </div>
        </div>
      </div>
      <div class="vscroll">
        <div class="v-top"></div>
        <div class="v-thumb"></div>
        <div class="v-end"><svg width="12" height="8" viewBox="0 0 12 8"><path d="M1.500 1.500L6 6l4.500-4.500" fill="none" stroke="#555" stroke-width="1.800"/></svg></div>
      </div>
    </div>
    <div class="dlg-foot">
      <div class="collapse"><i class="upcaret"></i></div>
      <div class="foot-btns"><span class="ok">确定</span><span class="cancel">取消</span></div>
    </div>
  </aside>
</div>
</body>
</html>
```

FILE: styles.css
```css
* { box-sizing: border-box; }
html, body { margin: 0; padding: 0; }
body {
  width: 1869px; height: 938px; overflow: hidden; background: #fff;
  font-family: "Open Sans", "Noto Sans CJK SC", sans-serif;
  font-size: 15px; color: #222;
}
.defs { position: absolute; }
i { font-style: normal; }
.app { position: relative; width: 1869px; height: 938px; overflow: hidden; display: flex; flex-direction: column; }

.caret { display: inline-block; width: 0; height: 0; flex: none; border-left: 4.500px solid transparent; border-right: 4.500px solid transparent; border-top: 5px solid #111; }

/* ribbon */
.ribbon { flex: none; height: 102px; display: flex; border-bottom: 1px solid #ddd; overflow: hidden; }
.group { display: flex; flex-direction: column; flex: none; border-right: 1px solid #ddd; height: 97px; }
.g1 { width: 206px; }
.g2 { width: 79px; }
.g3 { width: 158px; }
.tools { display: flex; height: 82px; flex: none; }
.g3 .tools { padding-left: 12px; gap: 8px; }
.tool { display: flex; flex-direction: column; align-items: center; font-size: 14px; flex: none; line-height: 18px; }
.ricon { flex: none; margin-bottom: 5px; }
.tlabel { display: block; text-align: center; }
.tool .caret { margin-top: 7px; }
.t-measure { width: 40px; margin-left: -14px; }
.t-measure .ricon { margin-left: -16px; }
.t-wide { width: 64px; }
.t-more { width: 46px; margin-left: 4px; }
.t-draft { width: 78px; }
.t-update { width: 84px; }
.t-show { width: 42px; }
.t-show .tlabel { line-height: 20px; }
.dis { color: #c4c4c4; }
.gfoot { flex: none; height: 18px; display: flex; align-items: center; color: #0e7fa8; font-size: 14px; line-height: 18px; }
.gname { flex: 1; text-align: center; }
.gfoot .caret { margin-right: 9px; }
.g1 .gname { padding-right: 27px; }
.g2 .gname { padding-right: 5px; }
.g3 .gname { padding-right: 6px; }
.mintext { font: 700 7px "Liberation Sans", sans-serif; text-anchor: middle; }

/* toolbar */
.toolbar { flex: none; height: 32px; display: flex; align-items: center; padding-left: 7px; border-bottom: 1px solid #999; white-space: nowrap; }
.menu { font-size: 14px; width: 56px; }
.tsep { width: 1px; height: 24px; background: #ddd; flex: none; }
.s1 { margin: 0 9px 0 7px; }
.s2 { margin: 0 6px; }
.s3 { margin: 0 12px 0 7px; }
.s4 { margin: 0 11px; }
.s5 { margin-left: 6px; }
.tbtn { width: 24px; height: 21px; flex: none; display: flex; align-items: center; justify-content: center; margin-right: 1px; }
.tbtn.on { width: 23px; background: #cfe6ec; border: 1px solid #aacfdc; margin-right: 0; }
.sel-box { display: flex; align-items: center; justify-content: space-between; background: #fff; border: 1px solid #aaa; padding: 0 9px 0 5px; overflow: hidden; white-space: nowrap; flex: none; }
.sel-box span { overflow: hidden; flex: 1; min-width: 0; }
.sel-box .caret { margin-left: 6px; }
.toolbar .sel-box { height: 25px; }
.f1 { width: 182px; margin-right: 10px; }
.f2 { width: 420px; margin-right: 6px; }
.f3 { width: 196px; padding-left: 7px; }
.grey { color: #b8b8b8; font-size: 14px; }
.gc { border-top-color: #aaa; }
.sicon { flex: none; display: flex; }
.i1 { margin-left: 11px; }
.i2 { margin-left: 8px; }
.i3 { margin-left: 5px; }
.dots { width: 16px; margin-left: 10px; color: #aaa; font-size: 14px; letter-spacing: 1px; line-height: 14px; }
.cs { margin-left: 5px; }
.vbtn { width: 23px; height: 22px; flex: none; background: #cfe6ec; border: 1px solid #aacfdc; margin-right: 1px; display: flex; align-items: center; justify-content: center; }
.mcs { font: 700 6.500px "Liberation Mono", monospace; text-anchor: middle; fill: #333; }

/* main */
.main { flex: 1; min-height: 0; display: flex; }
.strip { flex: none; width: 9px; }
.strip svg { display: block; }
.nav { flex: none; width: 486px; padding-left: 6px; display: flex; flex-direction: column; }
.nav-title { margin: 0; flex: none; height: 32px; font-weight: 400; font-size: 15px; line-height: 32px; padding-left: 5px; }
.table { flex: none; border-left: 2px solid #e2e2e2; }
.thead { display: grid; grid-template-columns: 158px 41px 28px 68px 36px 76px 71px; height: 25px; background: #f2f2f2; border-bottom: 1px solid #ddd; }
.h { padding-left: 6px; line-height: 24px; border-right: 1px solid #ddd; white-space: nowrap; overflow: hidden; font-size: 15px; }
.rows { position: relative; height: 658px; overflow: hidden; }
.row { display: grid; grid-template-columns: 158px 41px 28px 68px 36px 76px 71px; height: 24px; border-bottom: 1px solid #e8e8e8; background: #fff; font-size: 15.500px; white-space: nowrap; }
.row:nth-child(even) { background: #f8f8f8; }
.name { display: flex; align-items: center; border-right: 1px solid #000; overflow: hidden; height: 24px; }
.lv0 { padding-left: 3px; }
.lv1 { padding-left: 4px; }
.lv2 { padding-left: 23px; }
.lv3 { padding-left: 42px; }
.lv4 { padding-left: 61px; }
.gap { width: 16px; flex: none; }
.box { width: 11px; height: 11px; flex: none; margin-right: 5px; border: 1px solid #ccc; background: linear-gradient(#000,#000) center/7px 1px no-repeat #fff; }
.si { width: 16px; height: 16px; flex: none; }
.lbl { flex: 1; min-width: 0; align-self: stretch; padding-left: 2px; line-height: 25px; }
.c { padding: 1px 0 0 5px; border-right: 1px solid #e8e8e8; overflow: hidden; display: flex; align-items: center; height: 23px; }
.t { padding-left: 4px; }
.pend { color: #7b3fdb; }
.sel { font-weight: 700; }
.sel .lbl, .sel .c { background: #8bc0d2; }
.sel .lbl { height: 23px; }
.ck { width: 16px; height: 16px; flex: none; }
.bar { width: 8px; height: 14px; flex: none; margin-left: 4px; }
.tree { position: absolute; left: 0; top: 0; pointer-events: none; }
.hscroll { display: flex; height: 20px; margin-top: 1px; }
.hleft { width: 21px; display: flex; align-items: center; justify-content: center; flex: none; }
.hthumb { flex: 1; background: #c9c9c9; }
.panes { margin-top: 2px; border-top: 4px double #b4b4b4; padding-top: 1px; }
.pane { height: 28px; color: #0e7fa8; font-size: 18px; line-height: 25px; padding: 2px 0 0 7px; border-bottom: 2px solid #d4d4d4; }

/* dialog */
.dialog-slot { flex: none; width: 401px; }
.dialog { position: absolute; left: 495px; top: 0; width: 401px; height: 938px; background: #f0f0f0; border-right: 1px solid #c4c4c4; display: flex; flex-direction: column; }
.dlg-main { flex: none; height: 900px; display: flex; }
.dlg-content { flex: none; width: 368px; margin-left: 6px; background: #fff; overflow: hidden; }
.sec { border-bottom: 3px solid #d2d2d2; margin-bottom: 1px; padding: 0 9px 8px; }
.first { margin-top: -2px; }
.sec.closed { height: 30px; padding-bottom: 0; overflow: hidden; }
.sec-head { display: flex; justify-content: space-between; height: 34px; margin-right: -3px; margin-left: -2px; color: #0e7fa8; font-size: 18px; line-height: 28px; }
.chev { width: 16px; height: 10px; margin-top: 9px; flex: none; }
.f-row { display: flex; align-items: center; justify-content: space-between; height: 32px; margin-bottom: 2px; white-space: nowrap; }
.sec .f-row:last-child { margin-bottom: 0; }
.flabel { margin-top: -3px; }
.ctrl { display: flex; gap: 2px; align-items: flex-start; height: 32px; }
.wsel { width: 152px; height: 28px; }
.nsel { width: 131px; height: 28px; padding-right: 10px; }
.latin { font-size: 16px; }
.btn { width: 32px; height: 32px; flex: none; background: #fff; border: 1px solid #bbb; display: flex; align-items: center; justify-content: center; color: #555; }
.btn svg { width: 26px; height: 26px; }
.btn.off { border-color: #ddd; color: #ccc; }
.sub { background: #f0f0f0; border: 1px solid #ddd; padding: 0 8px 8px; margin-bottom: 2px; }
.sub-head { display: flex; justify-content: space-between; height: 32px; color: #0e7fa8; font-size: 15px; line-height: 24px; margin-right: -1px; }
.chev-s { width: 12px; height: 8px; margin-top: 10px; flex: none; }
.sub-row { display: flex; justify-content: space-between; align-items: center; height: 26px; margin-bottom: 2px; white-space: nowrap; }
.sub-row:last-child { margin-bottom: 0; }
.sub-row.tall { height: 32px; }
.s-preview { margin-bottom: 0; }
.s-change { height: 26px; padding-bottom: 0; overflow: hidden; margin-bottom: 1px; }
.val { background: #fff; border: 1px solid #aaa; height: 26px; text-align: right; padding-right: 5px; font-size: 18px; line-height: 24px; }
.v50 { width: 90px; }
.vout { width: 90px; font-size: 18px; }
.vz { letter-spacing: 1px; }
.out { display: flex; align-items: center; gap: 2px; margin-right: 11px; height: 26px; }
.lockb { width: 24px; height: 24px; margin-top: -2px; flex: none; border: 1px solid #bbb; background: #f0f0f0; display: flex; align-items: center; justify-content: center; }
.lockb svg { width: 14px; height: 18px; }
.check { width: 18px; height: 18px; flex: none; border: 1px solid #333; background: #fff; display: flex; align-items: center; justify-content: center; margin-top: -1px; }
.ops { display: flex; height: 32px; gap: 2px; padding-left: 108px; }
.btn-hi { width: 32px; height: 32px; margin-left: 74px; background: #ffe07a; flex: none; box-shadow: -2px 0 0 -1px #ffe9a8; }
.btn-hi svg { width: 32px; height: 32px; display: block; }
.vscroll { flex: none; width: 19px; margin-left: 1px; display: flex; flex-direction: column; }
.v-top { flex: none; height: 156px; background: #f6f6f6; }
.v-thumb { flex: none; height: 723px; background: #c8c8c8; }
.v-end { flex: 1; display: flex; justify-content: center; padding-top: 7px; }
.dlg-foot { flex: 1; padding-left: 6px; }
.collapse { height: 14px; width: 389px; border-bottom: 1px solid #d4d4d4; display: flex; justify-content: center; align-items: center; padding-right: 8px; padding-top: 2px; }
.upcaret { width: 0; height: 0; border-left: 5.500px solid transparent; border-right: 5.500px solid transparent; border-bottom: 6px solid #111; }
.foot-btns { display: flex; gap: 5px; padding: 9px 0 0 254px; }
.ok, .cancel { width: 60px; height: 30px; text-align: center; font-size: 15px; line-height: 28px; flex: none; }
.ok { background: #74b3c9; color: #fff; }
.cancel { background: #f0f0f0; border: 1px solid #aaa; }

/* viewport */
.view { flex: 1; min-width: 0; display: flex; flex-direction: column; }
.view-band { flex: none; height: 26px; border-bottom: 2px solid #4a9fb8; }
.view-row { flex: 1; min-height: 0; display: flex; }
.scene { flex: none; display: block; }
.rstrip { flex: 1; }
.rstrip svg { display: block; }
.axis path { stroke: #444; stroke-width: 1; fill: none; }
.toolpath path { fill: none; stroke-width: 3; }
.blue path { stroke: #0000f0; }
.dash path { stroke-dasharray: 11 6; }
.dash2 path { stroke-dasharray: 9 7; }
.pink path { stroke: #f8d8e4; stroke-width: 2.500; }
.amber path { stroke: #ffc000; stroke-width: 3; }
.rings ellipse, .rings path { fill: none; stroke-width: 2.200; }
.cyan ellipse, .cyan path { stroke: #00ffff; }
.teal ellipse { stroke: #4cbf90; stroke-width: 2.800; }
.b1 { fill: #b8d4e4; }
.b2 { fill: #78bcdc; }
.b3 { fill: #64aed6; }
.b4 { fill: #68b8dc; }
.b5 { fill: #90c4de; }
.b6 { fill: #a2cde2; }
.wm { font: 700 40px "Liberation Sans", "Noto Sans CJK SC", sans-serif; fill: #dfdfdf; }
.wm2 { font: 700 12px "Liberation Sans", sans-serif; fill: #dfdfdf; }
```
